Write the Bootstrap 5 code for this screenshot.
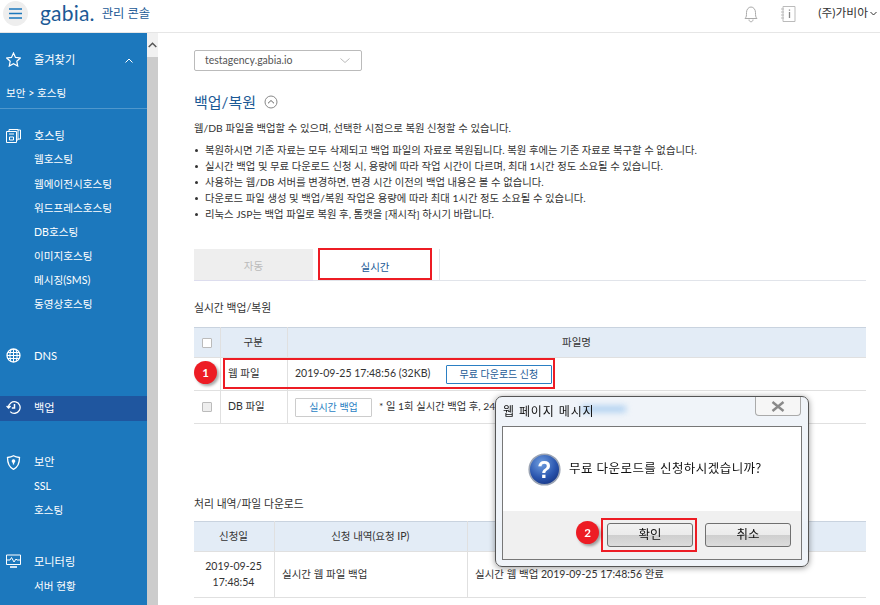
<!DOCTYPE html>
<html lang="ko">
<head>
  <meta charset="UTF-8">
  <title>백업/복원 - gabia 관리 콘솔</title>
  <link rel="stylesheet" href="https://cdn.jsdelivr.net/npm/bootstrap@5.3.0/dist/css/bootstrap.min.css">
  <style>
    html, body { height: 605px; overflow: hidden; }
    body { font-family: Lato, "Noto Sans CJK KR", sans-serif; font-size: 10.5px; color: #333; background: #fff; }
    .top-bar { height: 33px; border-bottom: 1px solid #e6e6e6; padding: 0 0 0 3px; }
    .burger { width: 25px; height: 25px; background: #eee; border: 0; margin-top: -5px; }
    .logo-txt { font-size: 21px; line-height: 24px; color: #1c5a96; margin: -7px 0 0 12px; letter-spacing: .2px; }
    .logo-sub { font-size: 12.3px; color: #1c5a96; margin: -3px 0 0 7px; }
    .user-name { font-size: 11.8px; margin-top: -6px; color: #333; }
    .side-nav { width: 147px; height: 572px; background: #1c78bd; color: #fff; font-size: 10.6px; overflow: hidden; }
    .side-row { height: 24.15px; padding-left: 34px; position: relative; }
    .side-row svg { position: absolute; left: 6px; top: 4px; }
    .side-head { font-size: 11.2px; }
    .crumb { height: 27px; padding-left: 6px; border-bottom: 1px solid #4f97cc; margin-top: 10px; }
    .side-on { background: #1f569f; }
    .fake-scroll { width: 11px; background: #ccc; }
    .fake-scroll-top { height: 24px; background: #f1f1f1; }
    .main-area { padding: 17px 14px 0 36px; min-width: 0; flex: 1; }
    .site-select { width: 168px; height: 21px; border: 1px solid #bbb; border-radius: 2px; padding: 0 11px 0 10px; color: #555; }
    .page-title { font-size: 15px; font-weight: 400; color: #1c5a96; margin: 19px 0 0; line-height: 24px; }
    .intro-txt { margin: 6px 0 0; line-height: 16px; font-size: 10.35px; }
    .note-list { margin: 6px 0 0; padding: 0; list-style: none; font-size: 10.35px; line-height: 16px; }
    .note-list li { padding-left: 11px; position: relative; }
    .note-list li::before { content: ""; position: absolute; left: 1px; top: 7px; width: 3px; height: 3px; border-radius: 50%; background: #333; }
    .tab-bar { margin-top: 27px; height: 32px; border-bottom: 1px solid #e1e4ea; }
    .tab-off { width: 119px; height: 32px; background: #eee; color: #bbb; border-bottom: 1px solid #dde; padding-top: 4px; }
    .tab-on { width: 114px; height: 32px; margin-left: 5px; border: 2px solid #ed1c24; color: #1c5a96; background: #fff; margin-top: -1px; padding-top: 8px; }
    .tab-rest { width: 1px; height: 32px; background: #e1e4ea; margin-left: 7px; }
    .sect-title { font-size: 10.8px; line-height: 16px; }
    .data-tbl { border-collapse: collapse; width: 100%; table-layout: fixed; margin: 0; font-size: 10.5px; }
    .data-tbl th, .data-tbl td { border: 1px solid #e0e0e0; border-left: 0; border-right: 1px solid #e0e0e0; padding: 0 8px 0 7.5px; vertical-align: middle; color: #333; box-shadow: none; }
    .data-tbl tr > :last-child { border-right: 0; }
    .data-tbl th { background: #e3ecf6; font-weight: 400; text-align: center; border-top: 1px solid #c9d3df; height: 30px; }
    .check-box { display: block; width: 10px; height: 10px; border: 1px solid #bbb; background: #fff; border-radius: 1px; margin: 0 auto; }
    .check-off { background: #eee; }
    .btn-free { font-size: 10px; line-height: 15px; padding: 1px 0; width: 106px; height: 19px; border: 1px solid #2b7fc3; border-radius: 1px; color: #1c5a96; margin-left: 13px; background: #fff; }
    .btn-live { font-size: 10px; line-height: 15px; padding: 1px 0; width: 77px; height: 19px; border: 1px solid #ccc; border-radius: 1px; color: #2b7fc3; margin-right: 7px; background: #fff; }
    .note-cut { font-size: 10.3px; white-space: nowrap; }
    .red-box { position: absolute; border: 2px solid #ed1c24; pointer-events: none; }
    .num-badge { position: absolute; width: 23px; height: 23px; border-radius: 50%; background: #ed1c24; color: #fff; font-weight: 700; font-size: 11.5px; box-shadow: 2px 2px 3px rgba(0,0,0,.35); }
    .msg-window { position: absolute; left: 495px; top: 396px; width: 314px; height: 171px; border: 1px solid #555; border-radius: 7px; background: rgba(238,243,248,.88); padding: 0 6px 7px; box-shadow: 0 1px 6px rgba(0,0,0,.4); backdrop-filter: blur(3px); }
    .msg-title { height: 29px; font-size: 12px; letter-spacing: .9px; color: #111; padding-left: 1px; }
    .msg-smear { position: absolute; left: 85px; top: 9px; width: 45px; height: 6px; background: #a9cdf0; filter: blur(3px); }
    .msg-close { position: absolute; right: 7px; top: 0; width: 46px; height: 19px; border: 1px solid #aaa; border-top: 0; border-radius: 0 0 4px 4px; background: #f6f6f6; }
    .msg-panel { position: relative; border: 1px solid #777; background: #fff; height: 134px; }
    .msg-body { height: 84px; padding-left: 25px; font-size: 12.5px; letter-spacing: .45px; color: #111; }
    .msg-foot { height: 48px; background: #f0f0f0; padding: 12px 10px 0 0; }
    .msg-btn { width: 86px; height: 24px; padding: 0; font-size: 12.5px; border: 1px solid #707070; border-radius: 3px; color: #111; background: linear-gradient(#f2f2f2 0, #ebebeb 50%, #cfcfcf 52%, #dcdcdc 100%); }
  </style>
</head>
<body>
  <header class="top-bar d-flex align-items-center">
    <button class="burger rounded-circle d-flex align-items-center justify-content-center p-0" aria-label="메뉴">
      <svg width="13" height="11" viewBox="0 0 13 11"><path d="M0 1h13M0 5.500h13M0 10h13" stroke="#1c78bd" stroke-width="1.600"/></svg>
    </button>
    <div class="logo-txt">gabia.</div>
    <div class="logo-sub">관리 콘솔</div>
    <div class="ms-auto d-flex align-items-center">
      <svg width="16" height="18" viewBox="0 0 16 18" fill="none" stroke="#aaa" style="margin-top:-4px"><path d="M2 13.500c1.500-1.500 1.500-3 1.500-6S5.500 2 8 2s4.500 2.500 4.500 5.500 0 4.500 1.500 6zM6 14.500c0 3 4 3 4 0"/></svg>
      <svg width="16" height="18" viewBox="0 0 16 18" fill="none" stroke="#bbb" style="margin:-4px 22px 0 21px"><path d="M3 1.500h12v15H3zM1 4h3M1 7h3M1 10h3M1 13h3"/><path d="M9.500 7v6M9.500 4.500v1.200" stroke="#888" stroke-width="1.300"/></svg>
      <span class="user-name">(주)가비아</span>
      <svg width="7" height="5" viewBox="0 0 7 5" fill="none" stroke="#333" style="margin:-5px 3px 0 2px"><path d="M.5 1l3 3 3-3"/></svg>
    </div>
  </header>

  <div class="d-flex">
    <nav class="side-nav">
      <div class="side-row side-head d-flex align-items-center pe-3" style="margin-top:15px">
        <svg width="15" height="15" viewBox="0 0 15 15" fill="none" stroke="#fff" stroke-width="1.200"><path d="M7.500 1l2 4.400 4.800.6-3.500 3.300.9 4.700-4.200-2.300L3.300 14l.9-4.700L.7 6l4.800-.6z"/></svg>
        즐겨찾기
        <svg style="left:125px;top:10px" width="8" height="5" viewBox="0 0 8 5" fill="none" stroke="#fff"><path d="M.5 4.500L4 1l3.500 3.500"/></svg>
      </div>
      <div class="crumb d-flex align-items-start pt-1">보안 &gt; 호스팅</div>

      <div class="side-row side-head d-flex align-items-center" style="margin-top:15px">
        <svg width="15" height="15" viewBox="0 0 15 15" fill="none" stroke="#fff"><path d="M.5 3.500h10v11H.5zM3 3.500V1.500h9v1.500M12 3v9h-1.500M12 2h2.500v9H12"/><path d="M3 6h5M3.500 9h4v3h-4z"/></svg>
        호스팅
      </div>
      <div class="side-row d-flex align-items-center">웹호스팅</div>
      <div class="side-row d-flex align-items-center">웹에이전시호스팅</div>
      <div class="side-row d-flex align-items-center">워드프레스호스팅</div>
      <div class="side-row d-flex align-items-center">DB호스팅</div>
      <div class="side-row d-flex align-items-center">이미지호스팅</div>
      <div class="side-row d-flex align-items-center">메시징(SMS)</div>
      <div class="side-row d-flex align-items-center">동영상호스팅</div>

      <div class="side-row side-head d-flex align-items-center" style="margin-top:27px">
        <svg width="15" height="15" viewBox="0 0 15 15" fill="none" stroke="#fff"><circle cx="7.500" cy="7.500" r="6.500" stroke-width="1.300"/><path d="M1 7.500h13M1.800 4.500h11.400M1.800 10.500h11.400M7.500 1v13M5 1.500c-1.500 3.500-1.500 8.500 0 12M10 1.500c1.500 3.500 1.500 8.500 0 12"/></svg>
        DNS
      </div>
      <div class="side-row side-head side-on d-flex align-items-center" style="margin-top:28px">
        <svg width="15" height="15" viewBox="0 0 15 15" fill="none" stroke="#fff" stroke-width="1.300"><path d="M2.500 7.500a5.800 5.800 0 1 1 1.700 4.100M.6 6l2 2 2-2"/><path d="M8.500 4v4H5.800" stroke-width="1.500"/></svg>
        백업
      </div>
      <div class="side-row side-head d-flex align-items-center" style="margin-top:30px">
        <svg width="15" height="15" viewBox="0 0 15 15" fill="none" stroke="#fff" stroke-width="1.300"><path d="M7.500.8c2 1.200 4 1.600 6 1.700 0 5-1 9.500-6 11.800C2.500 12 1.500 7.500 1.500 2.500c2-.1 4-.5 6-1.700z"/><circle cx="7.500" cy="6" r="1.200" fill="#fff"/><path d="M7.500 7v2.500"/></svg>
        보안
      </div>
      <div class="side-row d-flex align-items-center">SSL</div>
      <div class="side-row d-flex align-items-center">호스팅</div>
      <div class="side-row side-head d-flex align-items-center" style="margin-top:27px">
        <svg width="15" height="15" viewBox="0 0 15 15" fill="none" stroke="#fff"><path d="M.5 1h14v9.500H.5zM1 6h3l1.500-2.500L8 8l2-3 1 1h3"/><path d="M4 13h7" stroke-width="1.600"/></svg>
        모니터링
      </div>
      <div class="side-row d-flex align-items-center" style="margin-top:1px">서버 현황</div>
    </nav>

    <div class="fake-scroll">
      <div class="fake-scroll-top d-flex align-items-center justify-content-center">
        <svg width="9" height="6" viewBox="0 0 9 6" fill="none" stroke="#555" stroke-width="1.500"><path d="M.7 5L4.500 1.300 8.300 5"/></svg>
      </div>
    </div>

    <main class="main-area">
      <div class="site-select d-flex align-items-center justify-content-between">
        testagency.gabia.io
        <svg width="10" height="5" viewBox="0 0 10 5" fill="none" stroke="#bbb"><path d="M.5.5L5 4.500 9.500.5"/></svg>
      </div>

      <h1 class="page-title d-flex align-items-center gap-2">백업/복원
        <svg width="14" height="14" viewBox="0 0 14 14" fill="none" stroke="#888"><circle cx="7" cy="7" r="6"/><path d="M4 8.300L7 5.500l3 2.800" stroke="#666"/></svg>
      </h1>
      <p class="intro-txt">웹/DB 파일을 백업할 수 있으며, 선택한 시점으로 복원 신청할 수 있습니다.</p>
      <ul class="note-list">
        <li>복원하시면 기존 자료는 모두 삭제되고 백업 파일의 자료로 복원됩니다. 복원 후에는 기존 자료로 복구할 수 없습니다.</li>
        <li>실시간 백업 및 무료 다운로드 신청 시, 용량에 따라 작업 시간이 다르며, 최대 1시간 정도 소요될 수 있습니다.</li>
        <li>사용하는 웹/DB 서버를 변경하면, 변경 시간 이전의 백업 내용은 볼 수 없습니다.</li>
        <li>다운로드 파일 생성 및 백업/복원 작업은 용량에 따라 최대 1시간 정도 소요될 수 있습니다.</li>
        <li>리눅스 JSP는 백업 파일로 복원 후, 톰캣을 [재시작] 하시기 바랍니다.</li>
      </ul>

      <div class="tab-bar d-flex">
        <div class="tab-off d-flex align-items-center justify-content-center">자동</div>
        <div class="tab-on d-flex align-items-center justify-content-center">실시간</div>
        <div class="tab-rest"></div>
      </div>

      <div class="sect-title" style="margin-top:19px;margin-bottom:11px">실시간 백업/복원</div>
      <table class="table data-tbl">
        <colgroup><col style="width:26px"><col style="width:67px"><col></colgroup>
        <thead>
          <tr><th><span class="check-box"></span></th><th>구분</th><th>파일명</th></tr>
        </thead>
        <tbody>
          <tr style="height:33px"><td></td><td>웹 파일</td><td>2019-09-25 17:48:56 (32KB) <button class="btn btn-free">무료 다운로드 신청</button></td></tr>
          <tr style="height:33px"><td><span class="check-box check-off"></span></td><td>DB 파일</td><td><button class="btn btn-live">실시간 백업</button><span class="note-cut">* 일 1회 실시간 백업 후, 24</span></td></tr>
        </tbody>
      </table>

      <div class="sect-title" style="margin-top:72px;margin-bottom:9px">처리 내역/파일 다운로드</div>
      <table class="table data-tbl">
        <colgroup><col style="width:80px"><col style="width:193px"><col></colgroup>
        <thead>
          <tr><th>신청일</th><th>신청 내역(요청 IP)</th><th></th></tr>
        </thead>
        <tbody>
          <tr style="height:46px"><td class="text-center lh-base">2019-09-25<br>17:48:54</td><td>실시간 웹 파일 백업</td><td>실시간 웹 백업 2019-09-25 17:48:56 완료</td></tr>
        </tbody>
      </table>
    </main>
  </div>

  <!-- 설명용 표시 -->
  <div class="red-box" style="left:223px;top:358px;width:332px;height:31px"></div>
  <div class="num-badge d-flex align-items-center justify-content-center" style="left:194px;top:361px">1</div>

  <div class="msg-window">
    <div class="msg-smear"></div>
    <div class="msg-title d-flex align-items-center position-relative">웹 페이지 메시지</div>
    <div class="msg-close d-flex align-items-center justify-content-center">
      <svg width="14" height="11" viewBox="0 0 14 11"><path d="M1.500 1l11 9M12.500 1l-11 9" stroke="#8a8a8a" stroke-width="2.400"/></svg>
    </div>
    <div class="msg-panel">
      <div class="msg-body d-flex align-items-center gap-2">
        <svg width="33" height="33" viewBox="0 0 33 33">
          <defs><radialGradient id="qball" cx=".4" cy=".3" r=".8"><stop offset="0" stop-color="#6f9ee0"/><stop offset=".6" stop-color="#2a55ae"/><stop offset="1" stop-color="#14307c"/></radialGradient></defs>
          <circle cx="16.500" cy="16.500" r="15.300" fill="url(#qball)" stroke="#9aa3b3" stroke-width="1.600"/>
          <text x="16.500" y="24.500" text-anchor="middle" font-family="Liberation Sans, sans-serif" font-weight="700" font-size="23" fill="#fff">?</text>
        </svg>
        <span>무료 다운로드를 신청하시겠습니까?</span>
      </div>
      <div class="msg-foot d-flex justify-content-end gap-2">
        <button class="btn msg-btn">확인</button>
        <button class="btn msg-btn ms-1">취소</button>
      </div>
    </div>
  </div>
  <div class="red-box" style="left:601px;top:518px;width:96px;height:34px"></div>
  <div class="num-badge d-flex align-items-center justify-content-center" style="left:576px;top:521px">2</div>

  <script src="https://cdn.jsdelivr.net/npm/bootstrap@5.3.0/dist/js/bootstrap.bundle.min.js"></script>
</body>
</html>
